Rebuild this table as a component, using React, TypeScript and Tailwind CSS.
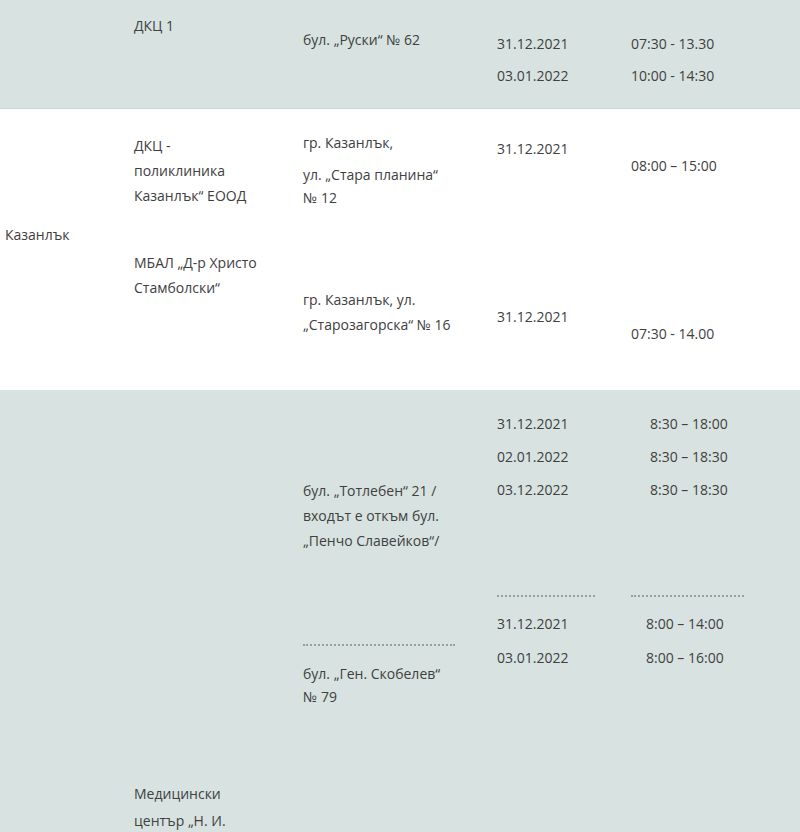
const cols = 'grid grid-cols-[129px_169px_194px_134px_169px]';

function Cell({ className = '', children }: { className?: string; children?: React.ReactNode }) {
  return <div className={`pl-[5px] ${className}`}>{children}</div>;
}

function Dots({ w }: { w: string }) {
  return <div className={`${w} border-t-2 border-dotted border-[#98a19f]`} />;
}

export default function App() {
  return (
    <div className="w-[800px] h-[832px] overflow-hidden bg-white text-[14px] leading-[25px] text-[#404040] font-['Open_Sans','Noto_Sans',sans-serif]">
      {/* ДКЦ 1 */}
      <div className={`${cols} h-[109px] bg-[#d8e3e1] border-b border-[#c9d3d2]`}>
        <Cell />
        <Cell className="pt-[13px]">ДКЦ 1</Cell>
        <Cell className="pt-[27px]">бул. „Руски“ № 62</Cell>
        <Cell className="pt-[31px] flex flex-col gap-[7px]">
          <p>31.12.2021</p>
          <p>03.01.2022</p>
        </Cell>
        <Cell className="pt-[31px] flex flex-col gap-[7px]">
          <p>07:30 - 13.30</p>
          <p>10:00 - 14:30</p>
        </Cell>
      </div>

      {/* Казанлък */}
      <div className={`${cols} h-[281px] bg-white`}>
        <Cell className="pt-[113px]">Казанлък</Cell>
        <Cell className="pt-[24px]">
          <p>
            ДКЦ -<br />
            поликлиника<br />
            Казанлък“ ЕООД
          </p>
          <p className="mt-[42px]">
            МБАЛ „Д-р Христо<br />
            Стамболски“
          </p>
        </Cell>
        <Cell className="pt-[21px]">
          <p>гр. Казанлък,</p>
          <p className="mt-[8px] leading-[23px]">
            ул. „Стара планина“<br />
            № 12
          </p>
          <p className="mt-[78px]">
            гр. Казанлък, ул.<br />
            „Старозагорска“ № 16
          </p>
        </Cell>
        <Cell className="pt-[27px]">
          <p>31.12.2021</p>
          <p className="mt-[143px]">31.12.2021</p>
        </Cell>
        <Cell className="pt-[44px]">
          <p>08:00 – 15:00</p>
          <p className="mt-[143px]">07:30 - 14.00</p>
        </Cell>
      </div>

      {/* Медицински център */}
      <div className={`${cols} h-[442px] bg-[#d8e3e1]`}>
        <Cell />
        <Cell className="pt-[390px]">
          <p className="leading-[27px]">
            Медицински<br />
            център „Н. И.<br />
            Пирогов“
          </p>
        </Cell>
        <Cell className="pt-[88px]">
          <p>
            бул. „Тотлебен“ 21 /<br />
            входът е откъм бул.<br />
            „Пенчо Славейков“/
          </p>
          <div className="mt-[91px]">
            <Dots w="w-[152px]" />
          </div>
          <p className="mt-[16px] leading-[23px]">
            бул. „Ген. Скобелев“<br />
            № 79
          </p>
        </Cell>
        <Cell className="pt-[21px]">
          <div className="flex flex-col gap-[8px]">
            <p>31.12.2021</p>
            <p>02.01.2022</p>
            <p>03.12.2022</p>
          </div>
          <div className="mt-[93px]">
            <Dots w="w-[98px]" />
          </div>
          <div className="mt-[14px] flex flex-col gap-[9px]">
            <p>31.12.2021</p>
            <p>03.01.2022</p>
          </div>
        </Cell>
        <Cell className="pt-[21px]">
          <div className="flex flex-col gap-[8px] pl-[19px]">
            <p>8:30 – 18:00</p>
            <p>8:30 – 18:30</p>
            <p>8:30 – 18:30</p>
          </div>
          <div className="mt-[93px]">
            <Dots w="w-[113px]" />
          </div>
          <div className="mt-[14px] flex flex-col gap-[9px] pl-[15px]">
            <p>8:00 – 14:00</p>
            <p>8:00 – 16:00</p>
          </div>
        </Cell>
      </div>
    </div>
  );
}
